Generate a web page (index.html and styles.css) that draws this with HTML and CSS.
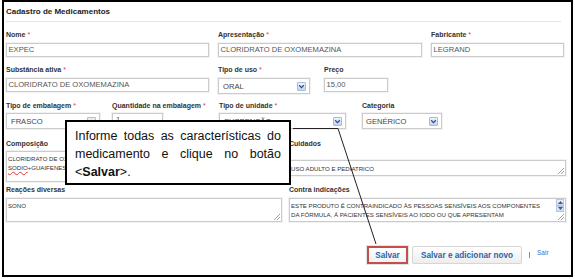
FILE: index.html
```html
<!DOCTYPE html>
<html lang="pt-BR">
<head>
<meta charset="utf-8">
<title>Cadastro de Medicamentos</title>
<link rel="stylesheet" href="styles.css">
</head>
<body>
<div class="frame">
  <div class="title">Cadastro de Medicamentos</div>

  <div class="row r1">
    <div class="field f-203"><div class="lbl">Nome <span class="req">*</span></div><div class="inp">EXPEC</div></div>
    <div class="field f-204"><div class="lbl">Apresentação <span class="req">*</span></div><div class="inp">CLORIDRATO DE OXOMEMAZINA</div></div>
    <div class="field f-133"><div class="lbl">Fabricante <span class="req">*</span></div><div class="inp">LEGRAND</div></div>
  </div>

  <div class="row r2">
    <div class="field f-203"><div class="lbl">Substância ativa <span class="req">*</span></div><div class="inp">CLORIDRATO DE OXOMEMAZINA</div></div>
    <div class="field f-92"><div class="lbl">Tipo de uso <span class="req">*</span></div>
      <div class="sel"><span>ORAL</span><span class="arr"><svg width="7" height="7" viewBox="0 0 7 7"><path d="M1.2 2.3 L3.5 4.6 L5.8 2.3" fill="none" stroke="#2d4f86" stroke-width="1.3"/></svg></span></div></div>
    <div class="field f-64 f-preco"><div class="lbl">Preço</div><div class="inp">15,00</div></div>
  </div>

  <div class="row r3">
    <div class="field c-106"><div class="lbl">Tipo de embalagem <span class="req">*</span></div>
      <div class="sel s-94"><span>FRASCO</span><span class="arr"><svg width="7" height="7" viewBox="0 0 7 7"><path d="M1.2 2.3 L3.5 4.6 L5.8 2.3" fill="none" stroke="#2d4f86" stroke-width="1.3"/></svg></span></div></div>
    <div class="field c-107"><div class="lbl">Quantidade na embalagem <span class="req">*</span></div><div class="inp i-51">1</div></div>
    <div class="field c-143"><div class="lbl">Tipo de unidade <span class="req">*</span></div>
      <div class="sel s-127"><span>SUSPENSÃO</span><span class="arr"><svg width="7" height="7" viewBox="0 0 7 7"><path d="M1.2 2.3 L3.5 4.6 L5.8 2.3" fill="none" stroke="#2d4f86" stroke-width="1.3"/></svg></span></div></div>
    <div class="field"><div class="lbl">Categoria</div>
      <div class="sel s-80"><span>GENÉRICO</span><span class="arr"><svg width="7" height="7" viewBox="0 0 7 7"><path d="M1.2 2.3 L3.5 4.6 L5.8 2.3" fill="none" stroke="#2d4f86" stroke-width="1.3"/></svg></span></div></div>
  </div>

  <div class="row r4">
    <div class="field f-276"><div class="lbl">Composição</div>
      <div class="ta ta-comp">
        <div class="ln">CLORIDRATO DE OXOMEMAZINA+IODETO DE POTÁSSIO+BENZOATO DE</div>
        <div class="ln"><span class="spell">SODIO</span>+GUAIFENESINA</div>
      </div></div>
    <div class="field f-277"><div class="lbl">Cuidados</div>
      <div class="ta ta-cuid"><div class="ln">USO ADULTO E PEDIATRICO</div></div></div>
  </div>

  <div class="row r5">
    <div class="field f-276"><div class="lbl">Reações diversas</div>
      <div class="ta ta-low"><div class="ln">SONO</div></div></div>
    <div class="field f-277"><div class="lbl">Contra indicações</div>
      <div class="ta ta-low ta-scroll">
        <div class="ta-text">
          <div class="ln">ESTE PRODUTO É CONTRAINDICADO ÀS PESSOAS SENSÍVEIS AOS COMPONENTES</div>
          <div class="ln">DA FÓRMULA, Á PACIENTES SENSÍVEIS AO IODO OU QUE APRESENTAM</div>
          <div class="ln">HIPERTIREOIDISMO.</div>
        </div>
        <div class="sb">
          <div class="sb-btn"><svg width="5" height="3" viewBox="0 0 5 3"><path d="M0 3 L2.5 0 L5 3Z" fill="#3a5a8a"/></svg></div>
          <div class="sb-btn"><svg width="5" height="3" viewBox="0 0 5 3"><path d="M0 0 L2.5 3 L5 0Z" fill="#3a5a8a"/></svg></div>
        </div>
      </div></div>
  </div>

  <div class="row actions">
    <div class="btn btn-save">Salvar</div>
    <div class="btn btn-new">Salvar e adicionar novo</div>
    <div class="sep"></div>
    <div class="sair">Sair</div>
  </div>
</div>

<div class="callout">Informe todas as características do medicamento e clique no botão &lt;<b>Salvar</b>&gt;.</div>
<svg class="connector" width="575" height="279" viewBox="0 0 575 279">
  <polyline points="293,128.5 338,128.5 376,244" fill="none" stroke="#222" stroke-width="1"/>
</svg>
</body>
</html>
```
FILE: styles.css
```css
* { box-sizing: border-box; }
html, body { margin: 0; padding: 0; background: #fff; }
body {
  width: 575px;
  height: 279px;
  overflow: hidden;
  position: relative;
  font-family: "Liberation Sans", Arial, sans-serif;
  color: #333;
}
.frame {
  margin-left: 2px;
  width: 571px;
  height: 277px;
  border: 2px solid #000;
  padding-left: 2px;
  background: #fff;
}
.title {
  height: 20px;
  line-height: 19px;
  border-bottom: 1px solid #e4e4e4;
  margin-right: 10px;
  font-size: 8px;
  font-weight: bold;
  color: #222;
}
.row { display: flex; align-items: flex-start; }
.r1 { margin-top: 8px; column-gap: 9px; }
.r2 { margin-top: 8px; column-gap: 9px; }
.r3 { margin-top: 7px; }
.r4 { margin-top: 10px; column-gap: 7px; }
.r5 { margin-top: 3px; column-gap: 7px; }

.f-203 { width: 203px; }
.f-204 { width: 204px; }
.f-133 { width: 133px; }
.f-92 { width: 92px; }
.f-64 { width: 64px; }
.f-preco { margin-left: 5px; }
.c-106 { width: 106px; }
.c-107 { width: 107px; }
.c-143 { width: 143px; }
.f-276 { width: 276px; }
.f-277 { width: 277px; }

.lbl {
  height: 10px;
  line-height: 10px;
  font-size: 7px;
  font-weight: bold;
  color: #333;
  white-space: nowrap;
}
.req { color: #e23a3a; font-weight: normal; }

.inp {
  margin-top: 3px;
  height: 14px;
  border: 1px solid #cbcbcb;
  box-shadow: 0 0 0 1px #f2f2f2;
  line-height: 12px;
  font-size: 7.6px;
  color: #555;
  padding-left: 1.5px;
  white-space: nowrap;
  overflow: hidden;
  background: #fff;
}
.i-51 { width: 51px; padding-left: 3px; }

.sel {
  margin-top: 3px;
  height: 16px;
  border: 1px solid #cbcbcb;
  box-shadow: 0 0 0 1px #f2f2f2;
  display: flex;
  align-items: center;
  justify-content: space-between;
  padding: 0 3px 0 4px;
  font-size: 7.6px;
  color: #444;
  white-space: nowrap;
  background: #fff;
}
.r3 .sel, .r3 .inp { margin-top: 2px; }
.s-94 { width: 94px; }
.s-127 { width: 127px; }
.s-80 { width: 80px; padding-left: 3px; }
.arr {
  width: 9px;
  height: 9px;
  border: 1px solid #a9bddb;
  border-radius: 1px;
  background: linear-gradient(#eef3fb, #c3d4ee);
  display: flex;
  align-items: center;
  justify-content: center;
}
.arr svg { display: block; }

.ta {
  position: relative;
  border: 1px solid #cbcbcb;
  box-shadow: 0 0 0 1px #f2f2f2;
  padding: 1px 1px;
  font-size: 6.1px;
  line-height: 9px;
  color: #333;
  overflow: hidden;
  background: #fff;
}
.ta::after {
  content: "";
  position: absolute;
  right: 1px;
  bottom: 1px;
  width: 6px;
  height: 6px;
  background: linear-gradient(135deg, transparent 0 48%, #a0a0a0 48% 56%, transparent 56% 72%, #a0a0a0 72% 80%, transparent 80%);
}
.ln { white-space: nowrap; }
.spell { text-decoration: underline wavy #e03030; text-decoration-thickness: 0.6px; }
.ta-comp { margin-top: 2px; height: 31px; padding-top: 1.5px; }
.ta-cuid { margin-top: 11px; height: 16px; padding-top: 2.5px; }
.ta-low { margin-top: 3px; height: 24px; padding-top: 1.5px; }
.ta-scroll { display: flex; padding-right: 1px; padding-top: 0; }
.ta-text { flex: 1; padding-top: 1.5px; overflow: hidden; }
.sb { width: 8px; display: flex; flex-direction: column; }
.sb-btn {
  height: 6.5px;
  border: 1px solid #b5c7e3;
  background: linear-gradient(#eef3fb, #cbd9ef);
  display: flex;
  align-items: center;
  justify-content: center;
}
.sb-btn svg { display: block; }

.actions { margin-top: 24px; align-items: center; height: 18px; }
.btn {
  height: 18px;
  border: 1px solid #d6d6d6;
  border-radius: 2px;
  background: linear-gradient(#ffffff, #ededed);
  font-size: 8.2px;
  font-weight: bold;
  color: #2c62a8;
  display: flex;
  align-items: center;
  justify-content: center;
  white-space: nowrap;
}
.btn-save {
  margin-left: 361px;
  width: 41px;
  border: 2px solid #c0504d;
  border-radius: 0;
  box-shadow: 0 0 0 1px #e2e2e2;
  background: linear-gradient(#ffffff, #f1f1f1);
}
.btn-new { margin-left: 4px; width: 110px; }
.sep { margin-left: 7px; width: 1px; height: 6px; background: #888; }
.sair {
  margin-left: 7px;
  align-self: flex-start;
  margin-top: 2px;
  line-height: 10px;
  font-size: 6.5px;
  color: #3a70c2;
}

.callout {
  position: absolute;
  left: 65px;
  top: 120px;
  width: 226px;
  height: 65px;
  border: 2px solid #000;
  background: #fff;
  padding: 5px 8px 0 8px;
  font-family: "Liberation Sans", Arial, sans-serif;
  font-size: 12.5px;
  line-height: 18px;
  color: #111;
  text-align: justify;
}
.connector {
  position: absolute;
  left: 0;
  top: 0;
  pointer-events: none;
}
```
